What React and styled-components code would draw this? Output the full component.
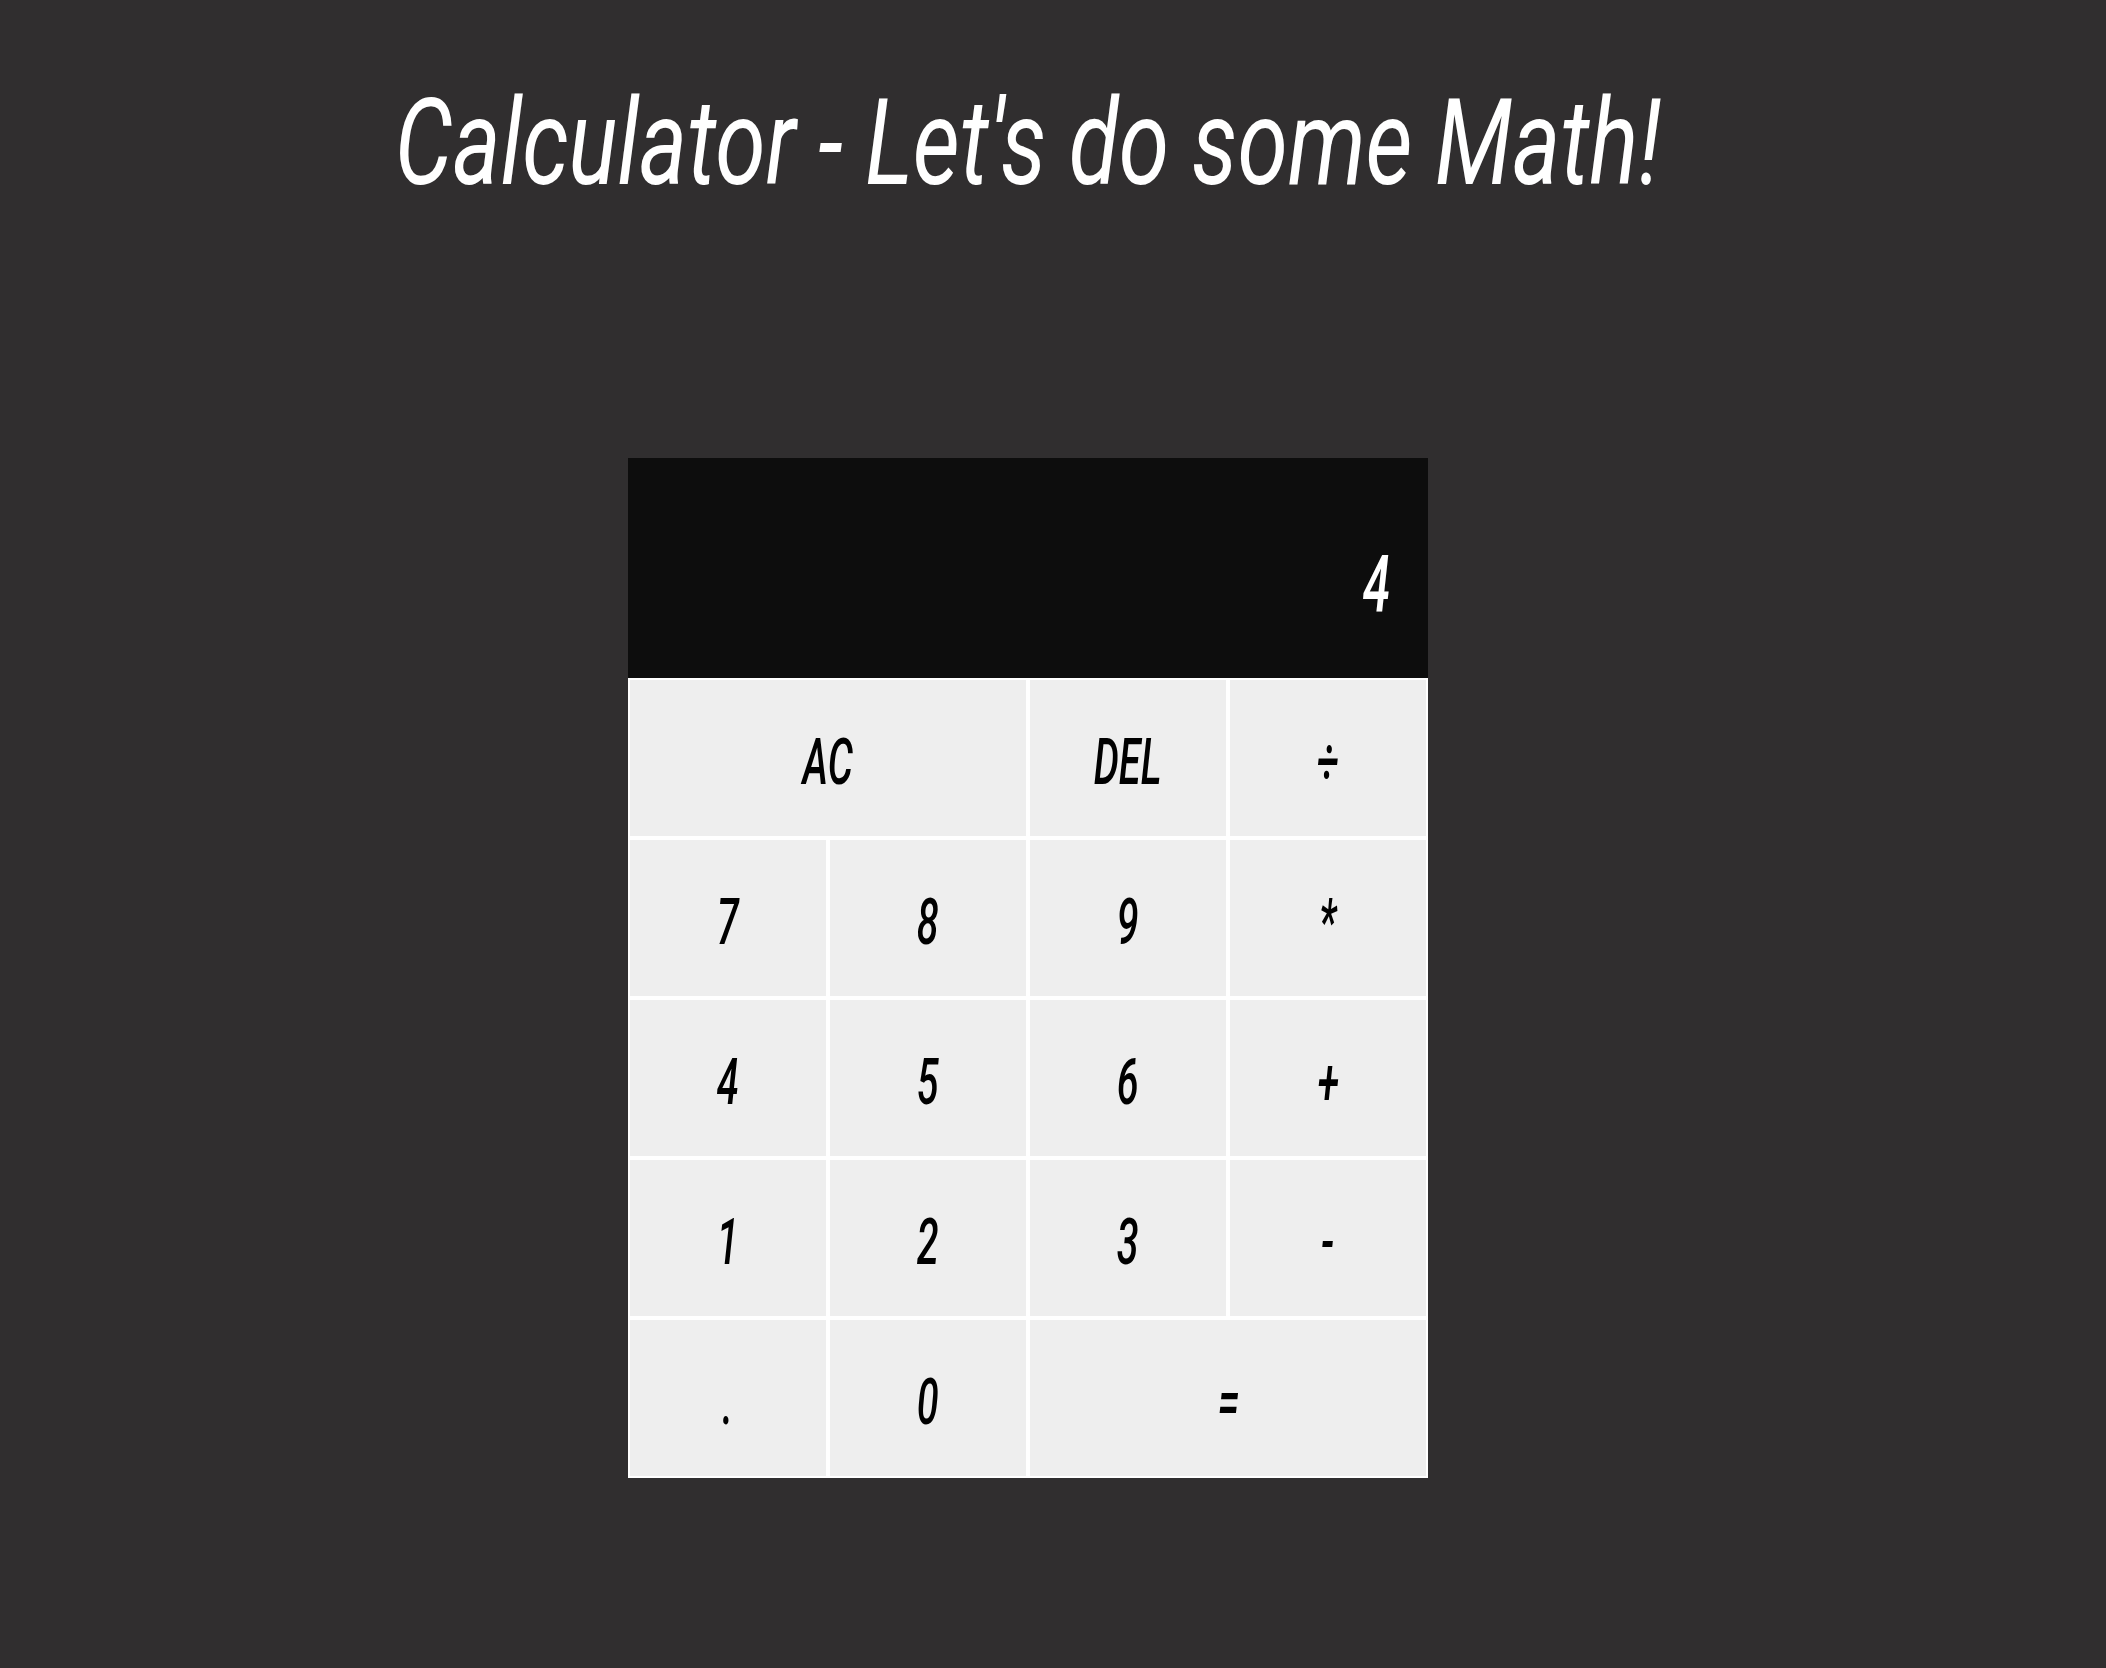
import React from "react";
import styled, { createGlobalStyle } from "styled-components";

const GlobalStyle = createGlobalStyle`
  * { box-sizing: border-box; }
  html, body { margin: 0; padding: 0; background: #302e2f; }
  body { font-family: Roboto, "Liberation Sans", sans-serif; }
`;

const Page = styled.main`
  min-height: 100vh;
  display: flex;
  flex-direction: column;
  align-items: center;
  padding: 83px 50px 0 0;
  background: #302e2f;
`;

const Title = styled.h1`
  margin: 0;
  font-family: Roboto, "Liberation Sans", sans-serif;
  font-size: 120px;
  line-height: 120px;
  font-style: italic;
  font-weight: 400;
  color: #ffffff;
  white-space: nowrap;
  transform: scaleX(0.761);
`;

const Calculator = styled.div`
  margin-top: 255px;
  display: grid;
  grid-template-columns: repeat(4, 200px);
  grid-template-rows: 220px repeat(5, 160px);
`;

const Display = styled.div`
  grid-column: 1 / -1;
  background: #0d0d0d;
  display: flex;
  flex-direction: column;
  align-items: flex-end;
  justify-content: flex-end;
  padding: 0 38px 53px 0;
`;

const Operand = styled.div`
  font-size: 80px;
  line-height: 80px;
  font-style: italic;
  font-weight: 500;
  color: #ffffff;
  transform: scaleX(0.62);
  transform-origin: right center;
`;

const Key = styled.button`
  grid-column: span ${(p) => p.$span || 1};
  border: 2px solid #ffffff;
  background: #eeeeee;
  cursor: pointer;
  font-family: Roboto, "Liberation Sans", sans-serif;
  font-size: 64px;
  font-style: italic;
  font-weight: 500;
  color: #000000;
  display: flex;
  align-items: center;
  justify-content: center;
  padding: 10px 0 0 0;
  margin: 0;
`;

const KeyLabel = styled.span`
  display: inline-block;
  line-height: 1;
  transform: scaleX(0.62);
`;

const keys = [
  { label: "AC", span: 2 },
  { label: "DEL" },
  { label: "÷" },
  { label: "7" },
  { label: "8" },
  { label: "9" },
  { label: "*" },
  { label: "4" },
  { label: "5" },
  { label: "6" },
  { label: "+" },
  { label: "1" },
  { label: "2" },
  { label: "3" },
  { label: "-" },
  { label: "." },
  { label: "0" },
  { label: "=", span: 2 },
];

export default function App() {
  return (
    <>
      <GlobalStyle />
      <Page>
        <Title>Calculator - Let's do some Math!</Title>
        <Calculator>
          <Display>
            <Operand>4</Operand>
          </Display>
          {keys.map((k) => (
            <Key key={k.label} $span={k.span}>
              <KeyLabel>{k.label}</KeyLabel>
            </Key>
          ))}
        </Calculator>
      </Page>
    </>
  );
}
